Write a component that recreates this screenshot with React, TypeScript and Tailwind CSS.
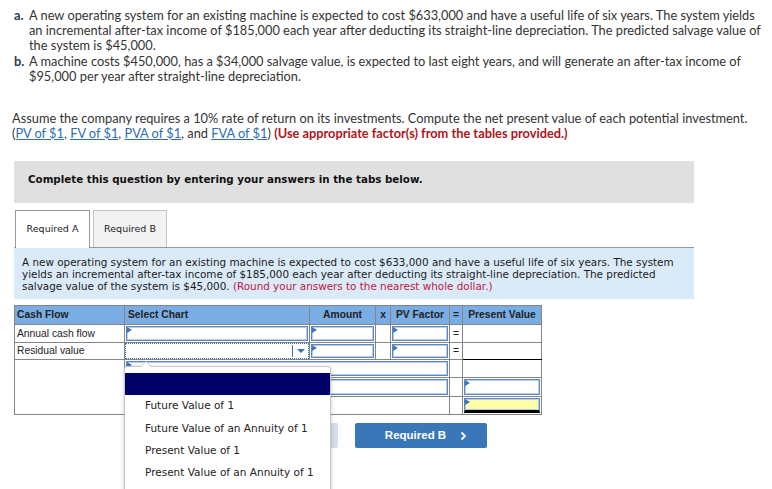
import React from "react";

const Flag = () => (
  <span className="absolute left-0 top-0 w-0 h-0 border-l-[5px] border-l-[#3b78c4] border-y-[3px] border-y-transparent" />
);

const Inp = ({ yellow = false, thickBottom = false }: { yellow?: boolean; thickBottom?: boolean }) => (
  <div
    className={`relative h-full border border-[#5b86bf] shadow-[inset_0_0_0_1px_#b9cfe9] ${yellow ? "bg-[#ffffa8]" : "bg-white"} ${thickBottom ? "border-b-[3px] border-b-black" : ""}`}
  >
    <Flag />
  </div>
);

export default function App() {
  return (
    <div className="relative w-[772px] h-[489px] overflow-hidden bg-white">
      {/* Problem text */}
      <div className="pl-[14px] pt-[8px] text-[12.8px] leading-[15px] text-[#333] [font-family:Lato,sans-serif] whitespace-nowrap">
        <div className="flex">
          <b className="w-[15px] shrink-0 text-[#2b3a55]">a.</b>
          <span>
            A new operating system for an existing machine is expected to cost $633,000 and have a useful life of six years. The system yields
            <br />
            an incremental after-tax income of $185,000 each year after deducting its straight-line depreciation. The predicted salvage value of
            <br />
            the system is $45,000.
          </span>
        </div>
        <div className="flex mt-[1px]">
          <b className="w-[15px] shrink-0 text-[#2b3a55]">b.</b>
          <span>
            A machine costs $450,000, has a $34,000 salvage value, is expected to last eight years, and will generate an after-tax income of
            <br />
            $95,000 per year after straight-line depreciation.
          </span>
        </div>
        <div className="mt-[27px] -ml-[2px]">
          Assume the company requires a 10% rate of return on its investments. Compute the net present value of each potential investment.
          <br />
          (<span className="text-[#2f6db3] underline">PV of $1</span>, <span className="text-[#2f6db3] underline">FV of $1</span>,{" "}
          <span className="text-[#2f6db3] underline">PVA of $1</span>, and <span className="text-[#2f6db3] underline">FVA of $1</span>){" "}
          <b className="text-[#b0141c]">(Use appropriate factor(s) from the tables provided.)</b>
        </div>
      </div>

      {/* Gray instruction box */}
      <div className="ml-[14px] mt-[20px] w-[680px] h-[42px] bg-[#e0e0e0] pl-[14px] pt-[12px] [font-family:DejaVu_Sans,sans-serif] text-[10.3px] leading-[12px]">
        <b className="text-[#111]">Complete this question by entering your answers in the tabs below.</b>
      </div>

      {/* Tabs */}
      <div className="ml-[14px] mt-[6px] w-[680px]">
        <div className="flex items-end h-[38px] gap-[3px] pl-[1px] [font-family:DejaVu_Sans,sans-serif] text-[9.5px] text-[#222]">
          <div className="w-[75px] h-[38px] bg-white border border-[#9a9a9a] border-b-0 flex items-center justify-center relative z-10 -mb-[1px]">
            Required A
          </div>
          <div className="w-[74px] h-[37px] bg-[#f2f2f2] border border-[#c4c4c4] border-b-0 flex items-center justify-center">
            Required B
          </div>
        </div>
        <div className="border-t border-[#999] bg-[#dbeaf8] h-[52px] pl-[8px] pt-[8px] [font-family:DejaVu_Sans,sans-serif] text-[10.4px] leading-[12px] text-[#1a1a1a] whitespace-nowrap">
          A new operating system for an existing machine is expected to cost $633,000 and have a useful life of six years. The system
          <br />
          yields an incremental after-tax income of $185,000 each year after deducting its straight-line depreciation. The predicted
          <br />
          salvage value of the system is $45,000. <span className="text-[#c3153f]">(Round your answers to the nearest whole dollar.)</span>
        </div>
      </div>

      {/* Table */}
      <div className="ml-[14px] mt-[6px]">
        <table className="table-fixed border-collapse w-[527px] [font-family:Liberation_Sans,Arial,sans-serif] text-[10.3px] text-[#222]">
          <colgroup>
            <col className="w-[110px]" />
            <col className="w-[185px]" />
            <col className="w-[66px]" />
            <col className="w-[15px]" />
            <col className="w-[59px]" />
            <col className="w-[13px]" />
            <col className="w-[79px]" />
          </colgroup>
          <thead>
            <tr className="h-[19px] bg-[#79ade3]">
              <th className="border border-[#858585] text-left pl-[2px] font-bold">Cash Flow</th>
              <th className="border border-[#858585] text-left pl-[3px] font-bold">Select Chart</th>
              <th className="border border-[#858585] text-center font-bold">Amount</th>
              <th className="border border-[#858585] text-center font-bold">x</th>
              <th className="border border-[#858585] text-center font-bold">PV Factor</th>
              <th className="border border-[#858585] text-center font-bold">=</th>
              <th className="border border-[#858585] text-center font-bold">Present Value</th>
            </tr>
          </thead>
          <tbody>
            <tr className="h-[18px]">
              <td className="border border-[#858585] pl-[2px]">Annual cash flow</td>
              <td className="border border-[#858585] p-[1px] h-[18px]"><Inp /></td>
              <td className="border border-[#858585] p-[1px] h-[18px]"><Inp /></td>
              <td className="border border-[#858585]"></td>
              <td className="border border-[#858585] p-[1px] h-[18px]"><Inp /></td>
              <td className="border border-[#858585] text-center">=</td>
              <td className="border border-[#858585]"></td>
            </tr>
            <tr className="h-[17px]">
              <td className="border border-[#858585] pl-[2px]">Residual value</td>
              <td className="border border-[#858585] p-0 h-[17px]">
                <div className="relative h-full border border-dotted border-[#3a6fb5] flex justify-end">
                  <div className="w-[16px] border-l border-[#3a6fb5] my-[1px] flex items-center justify-center">
                    <span className="w-0 h-0 border-x-[4px] border-x-transparent border-t-[4px] border-t-[#3a6fb5]" />
                  </div>
                </div>
              </td>
              <td className="border border-[#858585] p-[1px] h-[17px]"><Inp /></td>
              <td className="border border-[#858585]"></td>
              <td className="border border-[#858585] p-[1px] h-[17px]"><Inp /></td>
              <td className="border border-[#858585] text-center">=</td>
              <td className="border border-[#858585] border-b-black"></td>
            </tr>
            <tr className="h-[18px]">
              <td rowSpan={3} className="border border-[#858585]"></td>
              <td colSpan={4} className="border border-[#858585] p-[1px] h-[18px]"><Inp /></td>
              <td className="border border-[#858585]"></td>
              <td className="border border-[#858585] border-t-black"></td>
            </tr>
            <tr className="h-[19px]">
              <td colSpan={4} className="border border-[#858585] p-[1px] h-[19px]"><Inp /></td>
              <td className="border border-[#858585]"></td>
              <td className="border border-[#858585] p-[1px] h-[19px]"><Inp /></td>
            </tr>
            <tr className="h-[18px]">
              <td colSpan={4} className="border border-[#858585]"></td>
              <td className="border border-[#858585]"></td>
              <td className="border border-[#858585] p-[1px] h-[18px]"><Inp yellow thickBottom /></td>
            </tr>
          </tbody>
        </table>

        {/* Nav buttons */}
        <div className="flex gap-[17px] mt-[8px] ml-[192px] [font-family:Liberation_Sans,Arial,sans-serif]">
          <div className="w-[132px] h-[25px] rounded-[2px] bg-[#d3dfec]" />
          <div className="w-[132px] h-[25px] rounded-[2px] bg-[#3a77b8] flex items-center justify-center gap-[14px] pl-[10px] text-[11.5px] font-bold text-white">
            <span>Required B</span>
            <svg width="7" height="10" viewBox="0 0 7 10" className="mt-[1px]">
              <path d="M1.5 1.5 L5 5 L1.5 8.5" stroke="white" strokeWidth="1.8" fill="none" />
            </svg>
          </div>
        </div>
      </div>

      {/* Dropdown overlay */}
      <div className="absolute left-[124px] top-[366px] w-[207px] h-[140px] bg-white border border-[#c8c8c8] rounded-t-[3px] shadow-[0_1px_4px_rgba(0,0,0,0.2)] z-20">
        <span className="absolute -top-[6px] left-[15px] w-0 h-0 border-x-[6px] border-x-transparent border-b-[6px] border-b-[#c8c8c8]" />
        <span className="absolute -top-[5px] left-[16px] w-0 h-0 border-x-[5px] border-x-transparent border-b-[5px] border-b-white" />
        <div className="mt-[6px] h-[22px] bg-[#000066]" />
        <div className="[font-family:DejaVu_Sans,sans-serif] text-[10.5px] text-[#222]">
          {["Future Value of 1", "Future Value of an Annuity of 1", "Present Value of 1", "Present Value of an Annuity of 1"].map((t) => (
            <div key={t} className="h-[22.3px] flex items-center pl-[20px]">{t}</div>
          ))}
        </div>
      </div>
    </div>
  );
}
